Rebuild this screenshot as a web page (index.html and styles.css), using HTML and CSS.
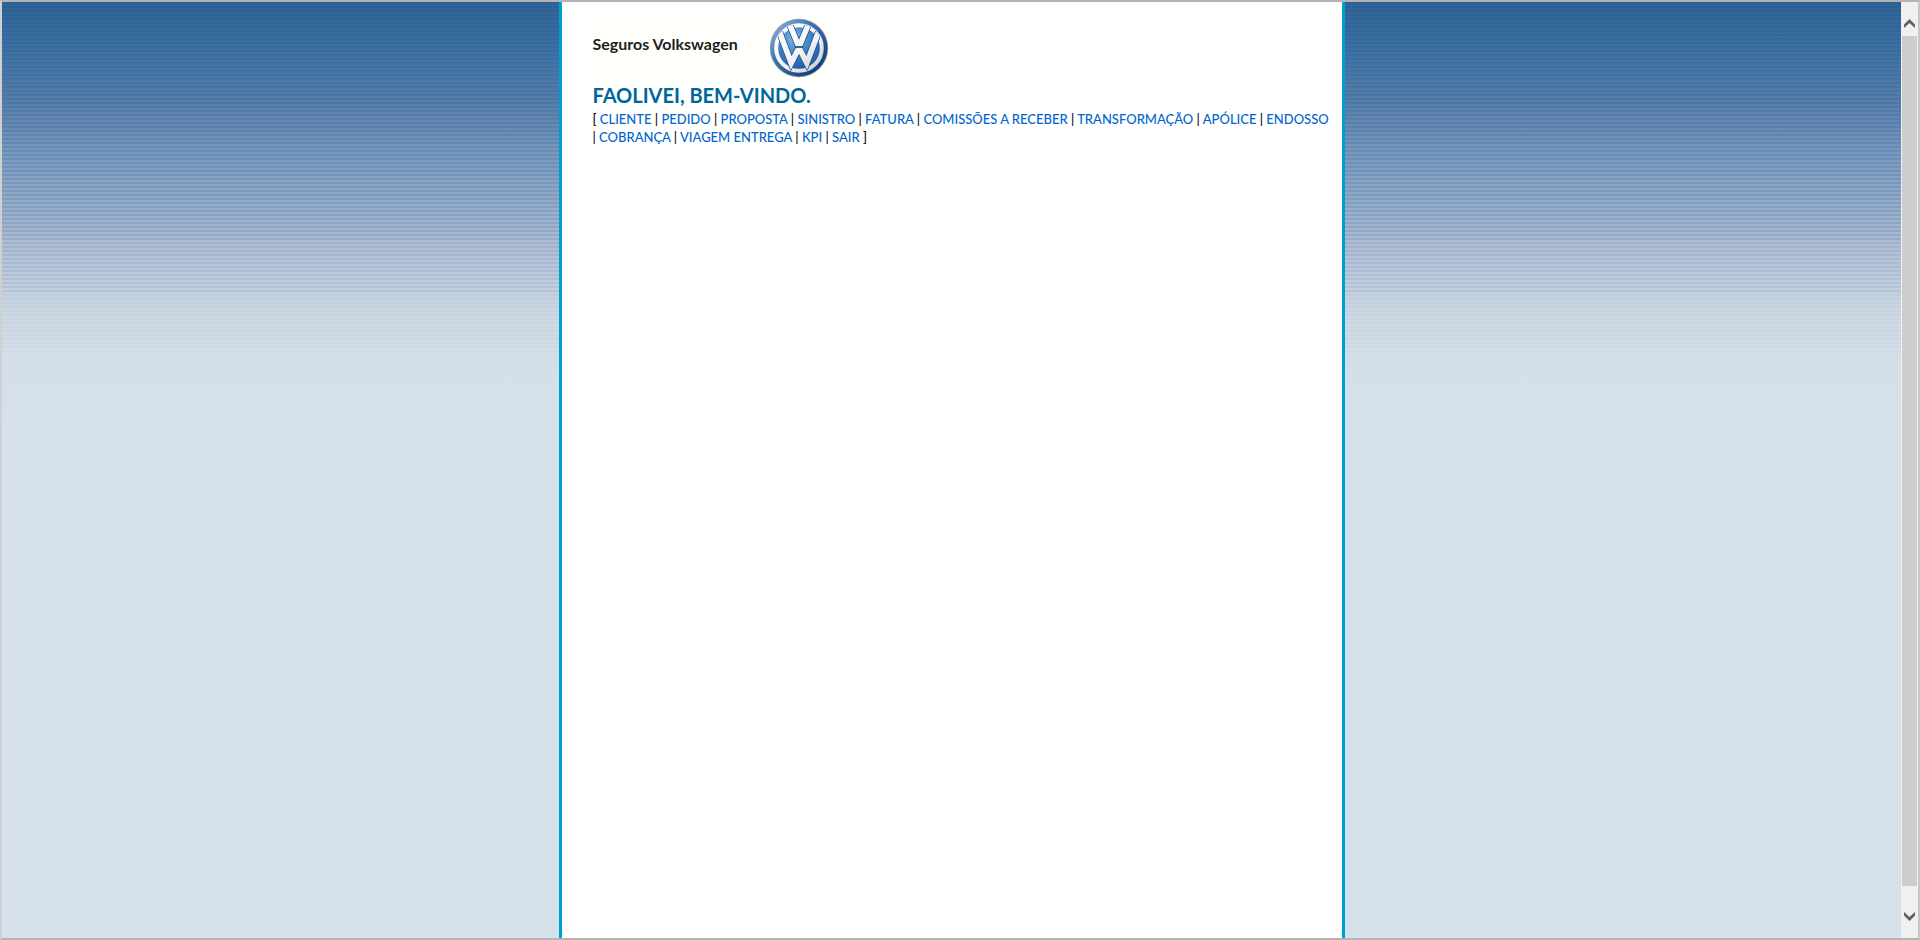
FILE: index.html
```html
<!DOCTYPE html>
<html lang="pt-BR">
<head>
<meta charset="utf-8">
<title>Seguros Volkswagen</title>
<link rel="stylesheet" href="styles.css">
</head>
<body>
<div class="window">
  <div class="viewport">
    <main class="page">
      <header class="brand">
        <span class="brand-name">Seguros Volkswagen</span>
        <svg class="brand-logo" viewBox="0 0 60 60" role="img" aria-label="Volkswagen">
          <defs>
            <linearGradient id="rim" x1="0" y1="0" x2="1" y2="1">
              <stop offset="0" stop-color="#9dbbdc"/>
              <stop offset=".4" stop-color="#3b72b2"/>
              <stop offset="1" stop-color="#0b2c62"/>
            </linearGradient>
            <radialGradient id="face" cx=".4" cy=".3" r=".75">
              <stop offset="0" stop-color="#7fb2e2"/>
              <stop offset=".5" stop-color="#3f80c4"/>
              <stop offset="1" stop-color="#1c5299"/>
            </radialGradient>
            <linearGradient id="metal" gradientUnits="userSpaceOnUse" x1="8" y1="8" x2="52" y2="52">
              <stop offset="0" stop-color="#ffffff"/>
              <stop offset=".6" stop-color="#f0f2f5"/>
              <stop offset="1" stop-color="#c3c9d2"/>
            </linearGradient>
            <clipPath id="inner"><circle cx="30" cy="30" r="24"/></clipPath>
          </defs>
          <circle cx="30" cy="30" r="29.200" fill="#8d9aa9"/>
          <circle cx="30" cy="30" r="28.400" fill="url(#rim)"/>
          <circle cx="30" cy="30" r="22.800" fill="url(#face)" stroke="url(#metal)" stroke-width="4"/>
          <g clip-path="url(#inner)" fill="none" stroke-miterlimit="8">
            <path d="M20.500 6 28.500 25.500H31.500L39.500 6M10.500 14 22.200 45 28.600 32.500H31.400L37.800 45 49.500 14" stroke="#1c4a86" stroke-width="7"/>
            <path d="M20.500 6 28.500 25.500H31.500L39.500 6M10.500 14 22.200 45 28.600 32.500H31.400L37.800 45 49.500 14" stroke="url(#metal)" stroke-width="5.600"/>
            <path d="M25.500 29H34.500" stroke="#2c609c" stroke-width="1.400"/>
          </g>
        </svg>
      </header>
      <h1 class="welcome">FAOLIVEI, BEM-VINDO.</h1>
      <nav class="menu">
        <span class="item">[ <a href="#cliente">CLIENTE</a></span>
        <span class="item"><span class="bar">|</span> <a href="#pedido">PEDIDO</a></span>
        <span class="item"><span class="bar">|</span> <a href="#proposta">PROPOSTA</a></span>
        <span class="item"><span class="bar">|</span> <a href="#sinistro">SINISTRO</a></span>
        <span class="item"><span class="bar">|</span> <a href="#fatura">FATURA</a></span>
        <span class="item"><span class="bar">|</span> <a href="#comissoes">COMISSÕES A RECEBER</a></span>
        <span class="item"><span class="bar">|</span> <a href="#transformacao">TRANSFORMAÇÃO</a></span>
        <span class="item"><span class="bar">|</span> <a href="#apolice">APÓLICE</a></span>
        <span class="item"><span class="bar">|</span> <a href="#endosso">ENDOSSO</a></span>
        <span class="item"><span class="bar">|</span> <a href="#cobranca">COBRANÇA</a></span>
        <span class="item"><span class="bar">|</span> <a href="#viagem">VIAGEM ENTREGA</a></span>
        <span class="item"><span class="bar">|</span> <a href="#kpi">KPI</a></span>
        <span class="item"><span class="bar">|</span> <a href="#sair">SAIR</a> ]</span>
      </nav>
    </main>
  </div>
  <div class="scrollbar">
    <button class="arrow" type="button" aria-label="Rolar para cima">
      <svg class="chevron" viewBox="0 0 11 9"><path d="M0 5.500 5.500 0 11 5.500V9L5.500 4 0 9Z"/></svg>
    </button>
    <div class="track"><div class="thumb"></div></div>
    <button class="arrow" type="button" aria-label="Rolar para baixo">
      <svg class="chevron" viewBox="0 0 11 9"><path d="M0 0 5.500 5 11 0V3.500L5.500 9 0 3.500Z"/></svg>
    </button>
  </div>
</div>
</body>
</html>
```
FILE: styles.css
```css
* {
  box-sizing: border-box;
}

body {
  margin: 0;
  background: #fff;
  font-family: Lato, "Open Sans", sans-serif;
}

.window {
  display: flex;
  height: 100vh;
  border: 2px solid;
  border-color: #b4b4b4 #c8c8c8 #b4b4b4 #d0d0d0;
}

.viewport {
  flex: 1;
  display: flex;
  justify-content: center;
  background:
    repeating-linear-gradient(rgba(0, 70, 110, 0.13) 0 2px, transparent 2px 4px) 0 0 / 100% 240px no-repeat,
    repeating-linear-gradient(rgba(0, 70, 110, 0.08) 0 2px, transparent 2px 4px) 0 240px / 100% 52px no-repeat,
    repeating-linear-gradient(rgba(0, 70, 110, 0.03) 0 2px, transparent 2px 4px) 0 292px / 100% 60px no-repeat,
    linear-gradient(#316397 0, #3f72a5 50px, #587eac 100px, #7898bf 150px, #94abca 200px, #aebbd4 240px, #bfcddd 280px, #ccd8e3 310px, #d4dee9 350px, #d7e1eb 420px) #d7e1eb;
}

.page {
  width: 786px;
  max-width: 100%;
  padding: 12px 10px 0 31px;
  border: solid #009dd1;
  border-width: 0 3px;
  background: #fff;
}

.brand {
  display: flex;
  align-items: center;
  gap: 31px;
  width: 240px;
  height: 67px;
  background: #fffffb;
}

.brand-name {
  padding-bottom: 8px;
  color: #1d1f1f;
  font-size: 16px;
  font-weight: 700;
  line-height: 20px;
  white-space: nowrap;
}

.brand-logo {
  flex: none;
  width: 60px;
  height: 60px;
}

.welcome {
  margin: 0;
  color: #006699;
  font-size: 20px;
  font-weight: 700;
  line-height: 29px;
}

.menu {
  color: #000;
  font-size: 13px;
  font-weight: 500;
  line-height: 18px;
}

.item {
  white-space: nowrap;
}

.menu a {
  color: #0066cc;
  text-decoration: none;
}

.scrollbar {
  display: flex;
  flex-direction: column;
  width: 17px;
  padding: 0 1px;
  background: #f0f0f0;
}

.arrow {
  display: flex;
  align-items: center;
  justify-content: center;
  height: 34px;
  padding: 8px 0 0;
  border: 0;
  background: transparent;
}

.arrow:last-child {
  height: 52px;
}

.chevron {
  width: 11px;
  height: 9px;
  fill: #606060;
}

.track {
  flex: 1;
  display: flex;
}

.thumb {
  flex: 1;
  background: #cdcdcd;
}
```
